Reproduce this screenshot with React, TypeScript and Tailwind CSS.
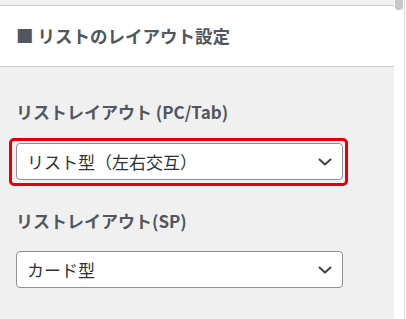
import React from 'react';

const font = { fontFamily: '"Noto Sans CJK JP", "Noto Sans", sans-serif' };

const Chevron: React.FC = () => (
  <svg width="14" height="8" viewBox="0 0 14 8" fill="none" className="shrink-0">
    <path d="M1.5 1.5 L7 6.5 L12.5 1.5" stroke="#3c434a" strokeWidth="2" strokeLinecap="round" strokeLinejoin="round" />
  </svg>
);

const Select: React.FC<{ value: string }> = ({ value }) => (
  <div className="h-[37px] w-[327px] bg-white border border-[#8c8f94] rounded-[4px] flex items-center justify-between pl-[10px] pr-[10px] text-[17px] text-[#2c3338]">
    <span>{value}</span>
    <Chevron />
  </div>
);

const App: React.FC = () => {
  return (
    <div className="w-[406px] h-[319px] bg-white flex overflow-hidden" style={font}>
      <div className="w-[394px] flex flex-col">
        <div className="h-[6px] bg-[#f0f0f1] border-b border-[#d0d0d3] shrink-0" />
        <div className="h-[61px] bg-white border-b border-[#d0d0d3] flex items-center pl-4 shrink-0">
          <h2 className="text-[17.5px] font-bold text-[#50575e]">■ リストのレイアウト設定</h2>
        </div>
        <div className="flex-1 bg-[#f0f0f1] px-4 pt-[33px]">
          <div className="text-[17px] font-bold text-[#50575e] leading-6">リストレイアウト (PC/Tab)</div>
          <div className="relative mt-[19px] w-[327px]">
            <Select value="リスト型（左右交互）" />
            <span className="absolute -left-[7px] -top-[5px] -right-[5px] -bottom-[6px] border-[3px] border-[#e2000f] rounded-[5px] pointer-events-none" />
          </div>
          <div className="text-[17px] font-bold text-[#50575e] leading-6 mt-[29px]">リストレイアウト(SP)</div>
          <div className="mt-[18px]">
            <Select value="カード型" />
          </div>
        </div>
      </div>
      <div className="w-[12px] relative flex">
        <div className="w-[10px] flex justify-center">
          <div className="w-[8px] h-[10px] bg-[#c8c8c8] rounded-b-[3px]" />
        </div>
        <div className="w-[1px] bg-[#dcdcde]" />
      </div>
    </div>
  );
};

export default App;
